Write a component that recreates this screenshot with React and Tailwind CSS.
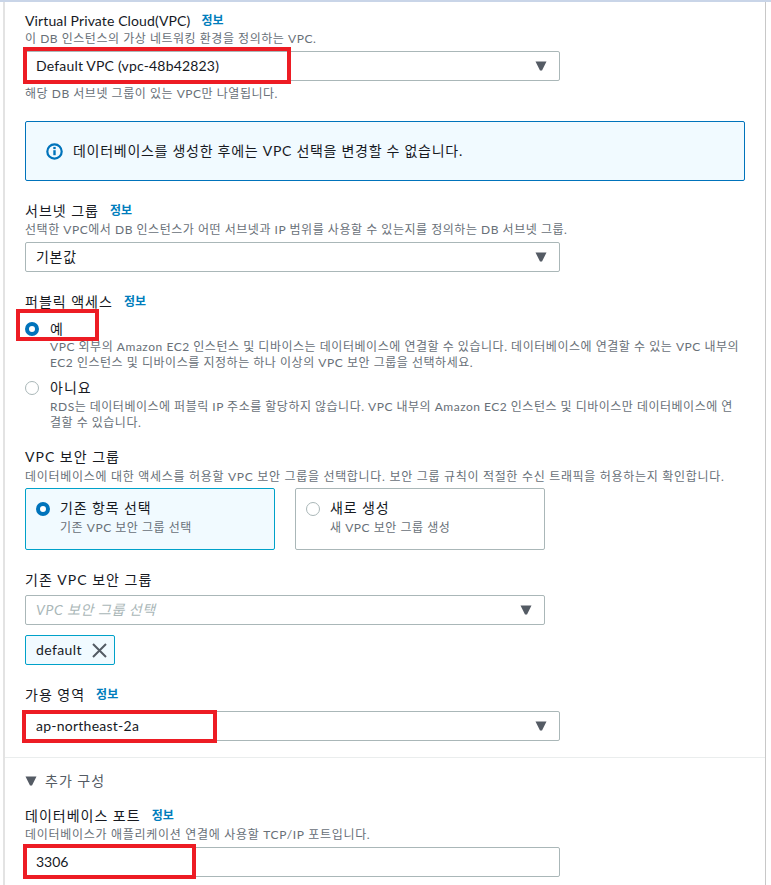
const font = "font-['Lato','Noto_Sans_CJK_KR',sans-serif]";

function Info() {
  return <span className="ml-[11px] text-xs font-bold tracking-normal text-[#007dbc]">정보</span>;
}

function Label({ children, info, className = "tracking-[1px]" }) {
  return (
    <div className={`flex h-[20px] items-center text-sm leading-[20px] text-[#16191f] ${className}`}>
      {children}
      {info && <Info />}
    </div>
  );
}

function Hint({ children, className = "", tracking = "tracking-[0.53px]" }) {
  return <p className={`text-xs leading-[16px] text-[#687078] ${tracking} ${className}`}>{children}</p>;
}

function Caret() {
  return (
    <svg width="12" height="10" viewBox="0 0 12 10" className="shrink-0">
      <path d="M0.5 0.5h11L7 9.5H5z" fill="#545b64" />
    </svg>
  );
}

function Select({ children, width = "w-[535px]", className = "" }) {
  return (
    <div className={`flex h-[30px] items-center justify-between rounded-[2px] border border-[#aab7b8] bg-white pl-[10px] pr-[12px] text-sm text-[#16191f] ${width} ${className}`}>
      {children}
      <Caret />
    </div>
  );
}

function Radio({ checked }) {
  if (checked) {
    return <span className="block h-[14px] w-[14px] shrink-0 rounded-full border-[4px] border-[#0073bb] bg-white" />;
  }
  return <span className="block h-[14px] w-[14px] shrink-0 rounded-full border border-[#aab7b8] bg-white" />;
}

function Marker({ className }) {
  return <div className={`pointer-events-none absolute border-[4px] border-[#ed1c24] ${className}`} />;
}

function Card({ checked, title, hint }) {
  const tone = checked ? "border-[#00a1c9] bg-[#f1faff]" : "border-[#aab7b8] bg-white";
  return (
    <div className={`flex h-[62px] w-[250px] gap-[10px] rounded-[2px] border pl-[10px] pt-[9px] ${tone}`}>
      <div className="mt-[4px]"><Radio checked={checked} /></div>
      <div>
        <div className="text-sm leading-[20px] tracking-[0.9px] text-[#16191f]">{title}</div>
        <Hint className="mt-[2px]">{hint}</Hint>
      </div>
    </div>
  );
}

export default function App() {
  return (
    <div className={`${font} relative h-[885px] w-[771px] overflow-hidden bg-white`}>
      <div className="h-[2px] bg-[#c9d5e8]" />
      <div className="ml-[3px] h-[883px] w-[763px] border-l-2 border-r border-l-[#e3e3e3] border-r-[#c8c8c8] pl-[20px] pt-[9px]">
        <div>
          <Label info className="tracking-[0.12px]">Virtual Private Cloud(VPC)</Label>
          <Hint>이 DB 인스턴스의 가상 네트워킹 환경을 정의하는 VPC.</Hint>
          <Select className="mt-[4px] tracking-[0.18px]">Default VPC (vpc-48b42823)</Select>
          <Hint className="mt-[5px]">해당 DB 서브넷 그룹이 있는 VPC만 나열됩니다.</Hint>
        </div>

        <div className="mt-[19px] flex h-[60px] w-[720px] items-center rounded-[2px] border border-[#0073bb] bg-[#f1faff] pl-[20px] text-sm tracking-[0.72px] text-[#16191f]">
          <svg width="17" height="17" viewBox="0 0 17 17" className="mr-[10px] shrink-0">
            <circle cx="8.5" cy="8.5" r="7.2" fill="none" stroke="#0073bb" strokeWidth="2.2" />
            <rect x="7.3" y="7.2" width="2.4" height="5" fill="#0073bb" />
            <rect x="7.3" y="3.9" width="2.4" height="2.2" fill="#0073bb" />
          </svg>
          데이터베이스를 생성한 후에는 VPC 선택을 변경할 수 없습니다.
        </div>

        <div className="mt-[20px]">
          <Label info>서브넷 그룹</Label>
          <Hint className="mt-px">선택한 VPC에서 DB 인스턴스가 어떤 서브넷과 IP 범위를 사용할 수 있는지를 정의하는 DB 서브넷 그룹.</Hint>
          <Select className="mt-[4px] tracking-[0.7px]">기본값</Select>
        </div>

        <div className="mt-[20px]">
          <Label info>퍼블릭 액세스</Label>
          <div className="mt-[7px] flex h-[20px] items-center gap-[11px] text-sm text-[#16191f]">
            <Radio checked />예
          </div>
          <div className="whitespace-nowrap pl-[25px] text-xs leading-[16px] tracking-[0.53px] text-[#687078]">
            VPC 외부의 Amazon EC2 인스턴스 및 디바이스는 데이터베이스에 연결할 수 있습니다. 데이터베이스에 연결할 수 있는 VPC 내부의
            <br />
            EC2 인스턴스 및 디바이스를 지정하는 하나 이상의 VPC 보안 그룹을 선택하세요.
          </div>
          <div className="mt-[7px] flex h-[20px] items-center gap-[11px] text-sm tracking-[1px] text-[#16191f]">
            <Radio />아니요
          </div>
          <div className="whitespace-nowrap pl-[25px] pt-px text-xs leading-[16px] tracking-[0.5px] text-[#687078]">
            RDS는 데이터베이스에 퍼블릭 IP 주소를 할당하지 않습니다. VPC 내부의 Amazon EC2 인스턴스 및 디바이스만 데이터베이스에 연
            <br />
            결할 수 있습니다.
          </div>
        </div>

        <div className="mt-[16px]">
          <Label>VPC 보안 그룹</Label>
          <Hint className="mt-[2px]" tracking="tracking-[0.7px]">데이터베이스에 대한 액세스를 허용할 VPC 보안 그룹을 선택합니다. 보안 그룹 규칙이 적절한 수신 트래픽을 허용하는지 확인합니다.</Hint>
          <div className="mt-[3px] flex gap-[20px]">
            <Card checked title="기존 항목 선택" hint="기존 VPC 보안 그룹 선택" />
            <Card title="새로 생성" hint="새 VPC 보안 그룹 생성" />
          </div>
        </div>

        <div className="mt-[20px]">
          <Label>기존 VPC 보안 그룹</Label>
          <Select width="w-[520px]" className="mt-[5px]">
            <span className="italic tracking-[0.6px] text-[#aab7b8]">VPC 보안 그룹 선택</span>
          </Select>
          <div className="mt-[10px] flex h-[30px] w-[90px] items-center rounded-[2px] border border-[#00a1c9] bg-[#f1faff] pl-[10px] text-sm tracking-[0.4px] text-[#16191f]">
            default
            <svg width="15" height="15" viewBox="0 0 15 15" className="ml-[10px] shrink-0">
              <path d="M1 1l13 13M14 1L1 14" fill="none" stroke="#545b64" strokeWidth="2" />
            </svg>
          </div>
        </div>

        <div className="mt-[20px]">
          <Label info>가용 영역</Label>
          <Select className="mt-[6px] tracking-[0.25px]">ap-northeast-2a</Select>
        </div>

        <div className="ml-[-20px] mt-[16px] h-px bg-[#eaeded]" />

        <div className="mt-[13px] flex h-[20px] items-center gap-[8px] text-sm tracking-[1px] text-[#545b64]">
          <Caret />
          추가 구성
        </div>

        <div className="mt-[15px]">
          <Label info>데이터베이스 포트</Label>
          <Hint className="mt-px" tracking="tracking-[0.7px]">데이터베이스가 애플리케이션 연결에 사용할 TCP/IP 포트입니다.</Hint>
          <div className="mt-[4px] flex h-[30px] w-[535px] items-center rounded-[2px] border border-[#aab7b8] bg-white pl-[10px] text-sm text-[#16191f]">
            3306
          </div>
        </div>
      </div>

      <Marker className="left-[23px] top-[47px] h-[37px] w-[268px]" />
      <Marker className="left-[16px] top-[309px] h-[32px] w-[83px]" />
      <Marker className="left-[22px] top-[710px] h-[33px] w-[195px]" />
      <Marker className="left-[23px] top-[844px] h-[35px] w-[173px]" />
    </div>
  );
}
